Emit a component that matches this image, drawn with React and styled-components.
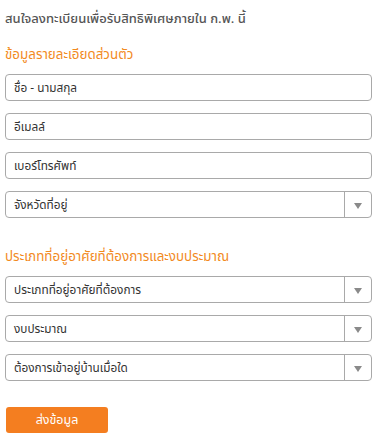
import React from 'react';
import styled, { createGlobalStyle } from 'styled-components';

const GlobalStyle = createGlobalStyle`
  body {
    margin: 0;
    background: #fff;
    font-family: "Noto Sans Thai", "Noto Sans", "Liberation Sans", sans-serif;
  }
`;

const Form = styled.form`
  width: 367px;
  margin-left: 5px;
  padding-top: 9px;
  display: flex;
  flex-direction: column;
`;

const Title = styled.h1`
  margin: 0;
  font-size: 13px;
  line-height: 20px;
  font-weight: 500;
  color: #555;
`;

const SectionHeading = styled.h2`
  margin: ${(p) => p.$top}px 0 9px;
  font-size: 13.4px;
  line-height: 20px;
  font-weight: 400;
  color: #f28a1e;
`;

const Fields = styled.div`
  display: flex;
  flex-direction: column;
  gap: 12px;
`;

const TextInput = styled.input`
  box-sizing: border-box;
  height: 27px;
  width: 100%;
  margin: 0;
  padding: 0 8px;
  border: 1px solid #a9a9a9;
  border-radius: 4px;
  font-family: inherit;
  font-size: 11.8px;
  color: #333;
  outline: none;
  &::placeholder {
    color: #333;
  }
`;

const SelectBox = styled.div`
  box-sizing: border-box;
  height: 27px;
  display: flex;
  align-items: stretch;
  border: 1px solid #a9a9a9;
  border-radius: 4px;
  font-size: 11.8px;
  color: #333;
`;

const SelectLabel = styled.span`
  flex: 1;
  display: flex;
  align-items: center;
  padding: 0 8px;
`;

const ArrowCell = styled.span`
  width: 26px;
  border-left: 1px solid #a9a9a9;
  display: flex;
  align-items: center;
  justify-content: center;
`;

const Arrow = styled.span`
  width: 0;
  height: 0;
  margin-top: 2px;
  border-left: 4px solid transparent;
  border-right: 4px solid transparent;
  border-top: 6px solid #8a8a8a;
`;

const SubmitButton = styled.button`
  align-self: flex-start;
  margin: 26px 0 0 1px;
  width: 102px;
  height: 26px;
  border: none;
  border-radius: 3px;
  background: #f47e20;
  color: #fff;
  font-family: inherit;
  font-size: 12.5px;
  cursor: pointer;
`;

const Select = ({ label }) => (
  <SelectBox>
    <SelectLabel>{label}</SelectLabel>
    <ArrowCell>
      <Arrow />
    </ArrowCell>
  </SelectBox>
);

const App = () => (
  <>
    <GlobalStyle />
    <Form onSubmit={(e) => e.preventDefault()}>
      <Title>สนใจลงทะเบียนเพื่อรับสิทธิพิเศษภายใน ก.พ. นี้</Title>

      <SectionHeading $top={16}>ข้อมูลรายละเอียดส่วนตัว</SectionHeading>
      <Fields>
        <TextInput placeholder="ชื่อ - นามสกุล" />
        <TextInput placeholder="อีเมลล์" />
        <TextInput placeholder="เบอร์โทรศัพท์" />
        <Select label="จังหวัดที่อยู่" />
      </Fields>

      <SectionHeading $top={29}>ประเภทที่อยู่อาศัยที่ต้องการและงบประมาณ</SectionHeading>
      <Fields>
        <Select label="ประเภทที่อยู่อาศัยที่ต้องการ" />
        <Select label="งบประมาณ" />
        <Select label="ต้องการเข้าอยู่บ้านเมื่อใด" />
      </Fields>

      <SubmitButton type="submit">ส่งข้อมูล</SubmitButton>
    </Form>
  </>
);

export default App;
